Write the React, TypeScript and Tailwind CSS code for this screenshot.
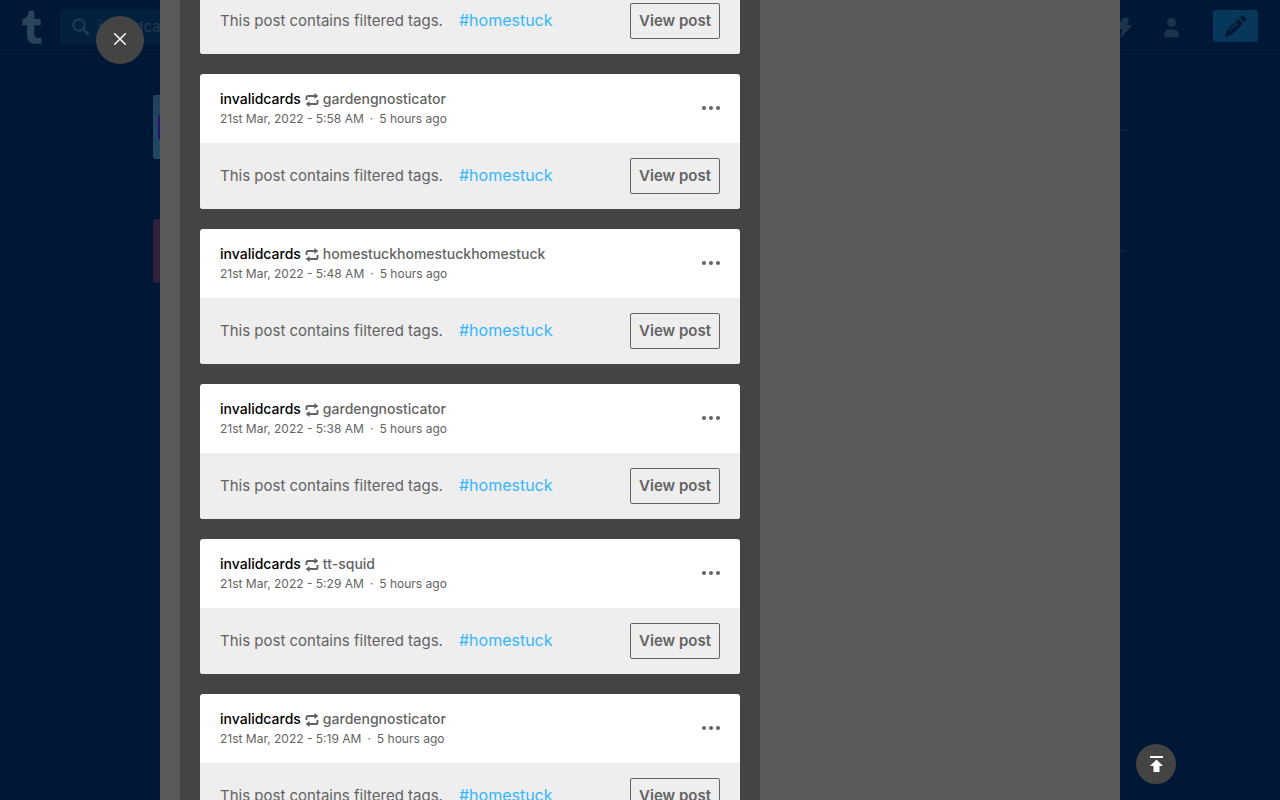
import React from "react";

type Post = { id: number; source: string; time: string };

const posts: Post[] = [
  { id: 1, source: "gardengnosticator", time: "6:08 AM" },
  { id: 2, source: "gardengnosticator", time: "5:58 AM" },
  { id: 3, source: "homestuckhomestuckhomestuck", time: "5:48 AM" },
  { id: 4, source: "gardengnosticator", time: "5:38 AM" },
  { id: 5, source: "tt-squid", time: "5:29 AM" },
  { id: 6, source: "gardengnosticator", time: "5:19 AM" },
];

function ReblogIcon() {
  return (
    <svg className="mt-0.5 size-3.5 shrink-0" viewBox="0 0 14 14" fill="none" aria-hidden="true">
      <path d="M1.5 7V4.6Q1.5 3 3.1 3H10M12.5 7V9.4Q12.5 11 10.9 11H4" stroke="currentColor" strokeWidth="1.9" />
      <path d="M9.4 0 13.4 3 9.4 6ZM4.6 8 .6 11 4.6 14Z" fill="currentColor" />
    </svg>
  );
}

function PostCard({ post }: { post: Post }) {
  return (
    <article className="shrink-0 overflow-hidden rounded-[3px] bg-white text-[#636363]">
      <header className="flex h-[69px] items-center justify-between px-5">
        <div>
          <div className="flex h-5 items-center gap-1 text-sm font-medium">
            <a href="#blog" className="text-black">invalidcards</a>
            <ReblogIcon />
            <a href="#source">{post.source}</a>
          </div>
          <p className="flex h-5 items-center gap-1.5 text-xs">
            <span>21st Mar, 2022 - {post.time}</span>
            <span>·</span>
            <span>5 hours ago</span>
          </p>
        </div>
        <button type="button" aria-label="More options" className="pb-0.5">
          <svg className="h-5 w-[18px]" viewBox="0 0 18 20" fill="currentColor" aria-hidden="true">
            <circle cx="2" cy="10" r="2" />
            <circle cx="9" cy="10" r="2" />
            <circle cx="16" cy="10" r="2" />
          </svg>
        </button>
      </header>
      <div className="flex h-[66px] items-center justify-between bg-[#eeeeee] px-5">
        <p className="flex items-baseline gap-4 pb-0.5 text-base">
          <span className="text-[15px]">This post contains filtered tags.</span>
          <a href="#homestuck" className="text-[#35b6ff]">#homestuck</a>
        </p>
        <button type="button" className="h-9 w-[90px] rounded-[2px] border border-[#636363] text-[15px] font-semibold whitespace-nowrap">
          View post
        </button>
      </div>
    </article>
  );
}

function Dashboard() {
  return (
    <div className="h-full">
      <header className="flex h-[55px] items-center border-b border-[#031d39] px-[22px]">
        <a href="#home" aria-label="Home" className="text-[#2d435b]">
          <svg className="h-[34px] w-5" viewBox="0 0 20 34" fill="currentColor" aria-hidden="true">
            <path d="M19.5 33.8H13.7C8.3 33.8 5 30.8 5 25.5V15.2H.3V9.6C4.5 8.3 6.3 5.3 6.6 1H12.2V9H18.7V15.2H12.2V24.3C12.2 27 13.5 27.9 15.7 27.9H19.5Z" />
          </svg>
        </a>
        <label className="ml-[18px] flex h-[34px] w-[400px] items-center rounded-[3px] bg-[#03213e] text-[#213a53]">
          <svg className="ml-3 size-[18px] shrink-0" viewBox="0 0 18 18" fill="none" stroke="currentColor" aria-hidden="true">
            <circle cx="7" cy="7" r="5.7" strokeWidth="2.2" />
            <path d="M11.3 11.3 16.7 16.7" strokeWidth="2.8" />
          </svg>
          <span className="sr-only">Search</span>
          <input className="ml-2 w-full bg-transparent text-[15px] outline-none" defaultValue="invalidcards" />
        </label>
        <nav className="ml-auto flex items-center gap-8 text-[#1c334b]">
          <a href="#activity" aria-label="Activity">
            <svg className="h-[19px] w-[15px]" viewBox="0 0 15 19" fill="currentColor" aria-hidden="true">
              <path d="M10.5 0H6.5Q5.8 0 5.4.8L.6 10Q.2 11 1.2 11H5.2L3.6 17.8Q3.6 19.3 4.9 18.7L14.5 8.2Q15.2 7 14 7H10L12 1.3Q12 .1 10.5 0Z" />
            </svg>
          </a>
          <a href="#account" aria-label="Account">
            <svg className="h-[19px] w-[15px]" viewBox="0 0 15 19" fill="currentColor" aria-hidden="true">
              <circle cx="7.5" cy="4.5" r="4.5" />
              <path d="M0 18Q0 11 7.5 11T15 18Q15 19 14 19H1Q0 19 0 18Z" />
            </svg>
          </a>
          <button type="button" aria-label="Create a post" className="mb-0.5 ml-0.5 flex h-8 w-[45px] items-center justify-center rounded-[3px] bg-[#07375a] text-[#001835]">
            <svg className="size-[22px]" viewBox="0 0 22 22" fill="currentColor" aria-hidden="true">
              <path d="M13.5 4.2 18 8.7 6.7 19.8 1.2 22Q-.3 22.3 0 20.8L1.8 15.6Z" />
              <path d="M14.7 2.9 16.9.5Q17.5 0 18.1.5L21.5 3.9Q22 4.5 21.5 5.1L19.3 7.4Z" />
              <path d="M5.2 15.2 12.3 8.2" stroke="#07375a" strokeWidth="1.3" fill="none" />
            </svg>
          </button>
        </nav>
      </header>
      <main className="mx-[153px] flex flex-col gap-[60px] pt-10">
        <div className="flex items-center gap-5">
          <div className="flex size-16 items-center rounded-[3px] bg-linear-to-br from-[#24415d] via-[#1e4963] to-[#283b60]">
            <div className="ml-[5px] h-6 w-12 bg-[#211668]" />
          </div>
          <hr className="mt-1.5 flex-1 border-t-2 border-[#03213e]" />
        </div>
        <div className="flex items-center gap-5">
          <div className="size-16 rounded-[3px] bg-[#302039]" />
          <hr className="flex-1 border-t-2 border-[#03213e]" />
        </div>
      </main>
    </div>
  );
}

export default function App() {
  return (
    <div className="relative h-screen overflow-hidden bg-[#001835] font-['Inter','Liberation_Sans',sans-serif]">
      <Dashboard />
      <div className="absolute inset-0 flex">
        <div className="flex w-40 shrink-0 justify-end pt-4 pr-4">
          <button type="button" aria-label="Close" className="flex size-12 items-center justify-center rounded-full bg-[#444444] pb-0.5 text-white">
            <svg className="size-3" viewBox="0 0 12 12" fill="none" stroke="currentColor" strokeWidth="1.5" strokeLinecap="round" aria-hidden="true">
              <path d="M.7.7 11.3 11.3M11.3.7.7 11.3" />
            </svg>
          </button>
        </div>
        <section aria-label="Blog posts" className="flex min-w-0 flex-1 overflow-hidden bg-[#5a5a5a] pl-5">
          <div className="w-full max-w-[580px] bg-[#444444] px-5">
            <div className="-mt-[81px] flex flex-col gap-5">
              {posts.map((post) => (
                <PostCard key={post.id} post={post} />
              ))}
            </div>
          </div>
        </section>
        <div className="flex w-40 shrink-0 items-end pb-4 pl-4">
          <button type="button" aria-label="Scroll to top" className="flex size-10 items-center justify-center rounded-full bg-[#444444] text-white">
            <svg className="h-4 w-[13px]" viewBox="0 0 13 16" fill="currentColor" aria-hidden="true">
              <path d="M0 0H13V2H0ZM6.5 3.5 13 10H9.5V16H3.5V10H0Z" />
            </svg>
          </button>
        </div>
      </div>
    </div>
  );
}
